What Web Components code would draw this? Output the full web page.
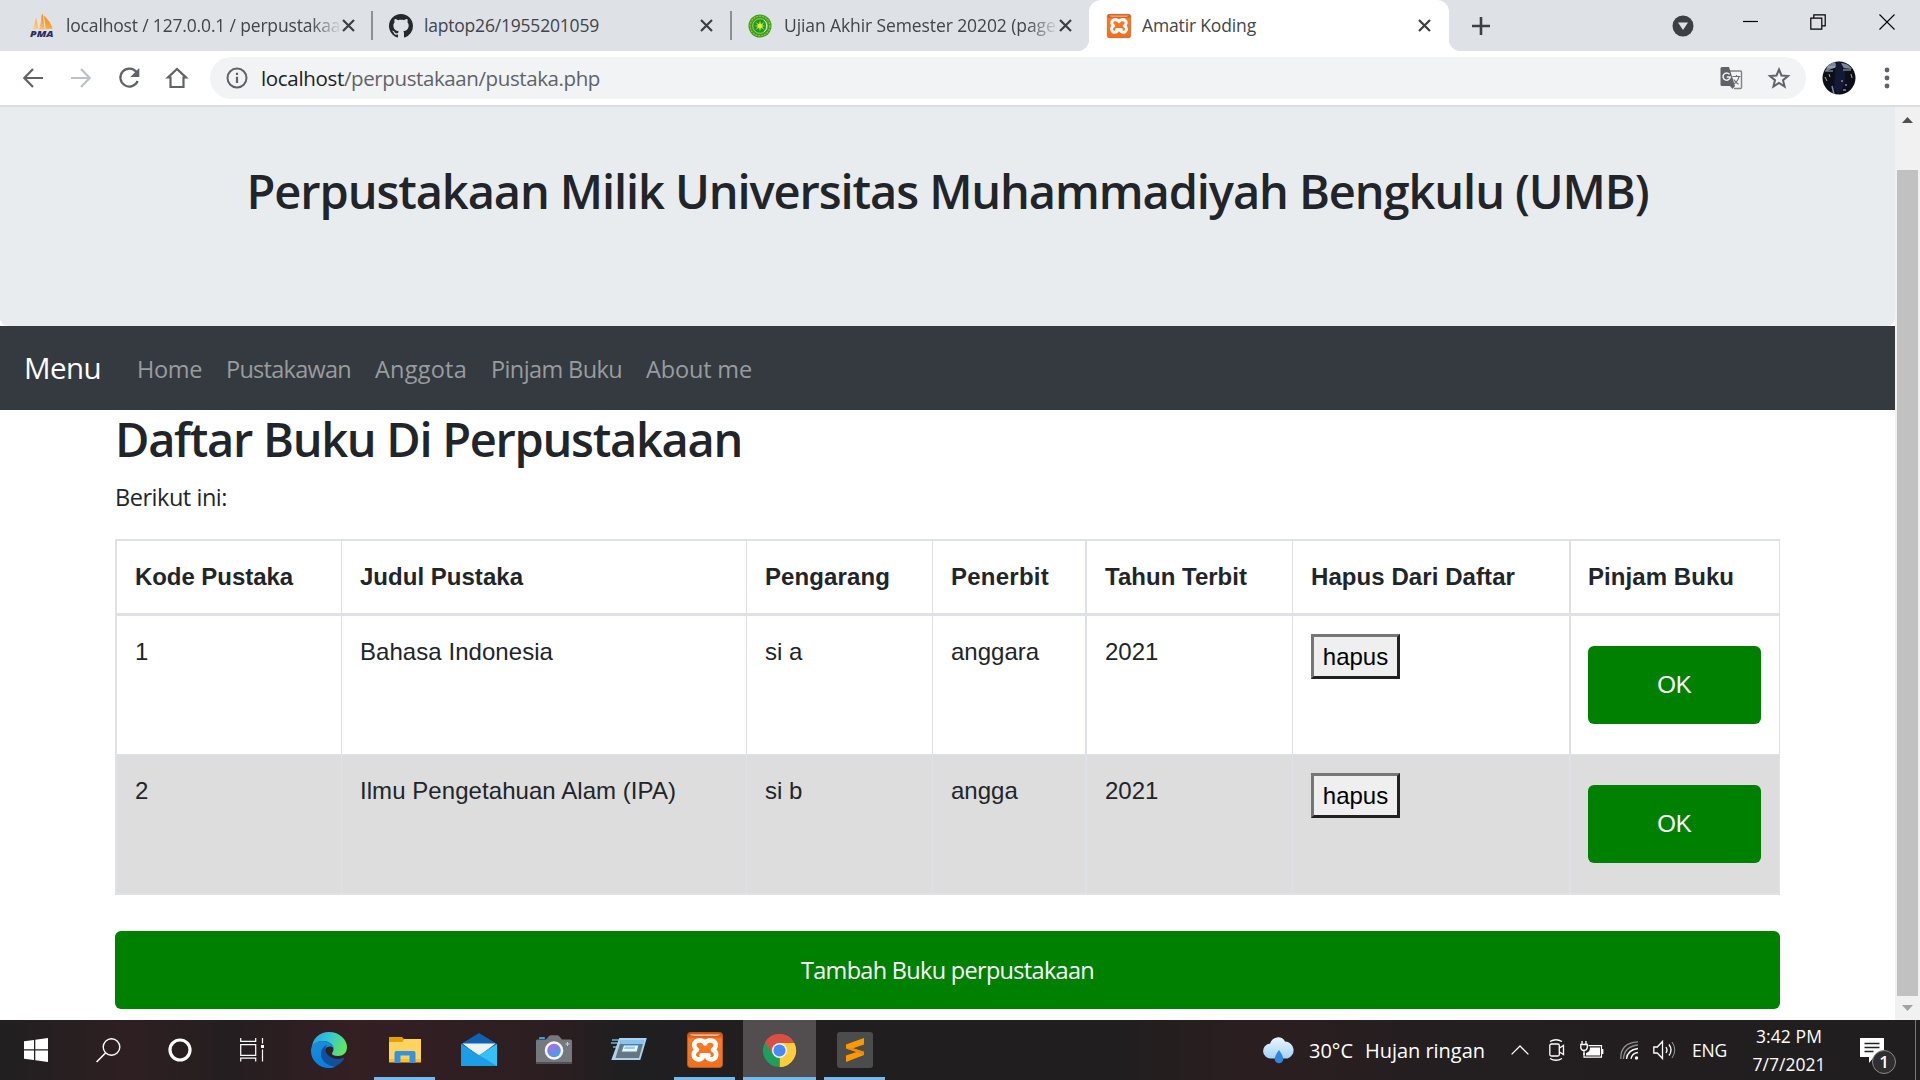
<!DOCTYPE html>
<html lang="id">
<head>
<meta charset="utf-8">
<title>Amatir Koding</title>
<style>
html,body{margin:0;width:1920px;height:1080px;overflow:hidden;background:#fff}
body{font-family:"Open Sans","Noto Sans",sans-serif}
</style>
</head>
<body>
<desk-screen></desk-screen>
<script>
const define=(name,html,ready)=>{
  const t=document.createElement('template');t.innerHTML=html;
  customElements.define(name,class extends HTMLElement{
    constructor(){super();this.attachShadow({mode:'open'}).append(t.content.cloneNode(true));}
    connectedCallback(){if(ready)ready(this,this.shadowRoot);}
  });
};

/* Text run whose tracking is tuned so the line is exactly `w` pixels wide */
define('fit-text','<style>:host{display:inline-block;white-space:pre;flex:none}span{display:inline-block}</style><span><slot></slot></span>',(el,r)=>{
  const w=+el.getAttribute('w'),s=r.querySelector('span');
  if(!w)return;
  el.style.width=w+'px';
  const n=el.textContent.length,nat=s.getBoundingClientRect().width;
  s.style.letterSpacing=((w-nat)/n)+'px';
});

const XAMPP=`<defs><linearGradient id="xg" x1="0" y1="0" x2="0" y2="1"><stop offset="0" stop-color="#c9571a"/><stop offset=".14" stop-color="#e0641f"/><stop offset=".18" stop-color="#fb7a24"/><stop offset="1" stop-color="#ee7020"/></linearGradient></defs>
<rect x=".5" y=".5" width="35" height="35" rx="3" fill="url(#xg)" stroke="#bb5a20"/><path d="M3 2.3h30q-1 1.7-4 1.7H7Q4 4 3 2.3z" fill="#f7b48a"/>
<path d="M18 11.3C16.500 8.500 12 7.500 9 9.500C6 12 7 16 10 17.800C6 19.500 5.800 25 9 26.700C12.500 28.300 16 26.500 16.300 23.500M18 11.300C19.500 8.500 24 7.500 27 9.500C30 12 29 16 26 17.800C30 19.500 30.200 25 27 26.700C23.500 28.300 20 26.500 19.700 23.500M14.500 23.300H21.500" fill="none" stroke="#fff" stroke-width="4.600" stroke-linecap="round" stroke-linejoin="round"/>`;
const ICONS={
 pma:[24,24,`<defs><linearGradient id="pg" x1="0" y1="1" x2="1" y2="0"><stop offset="0" stop-color="#fbd9a0"/><stop offset=".6" stop-color="#f99b2a"/><stop offset="1" stop-color="#f58a10"/></linearGradient></defs><path d="M2 15.500Q5.500 10 6 3.500L8.500 15zM9 15.500Q11.500 8 11.500 1L13 0l1.500 15.500zM14 1.500Q20 7 22.500 14.500L15.500 15.500z" fill="url(#pg)"/><text x="0" y="23" font-family="Open Sans" font-size="9.500" font-weight="800" font-style="italic" fill="#2c2c63" textLength="23.500" lengthAdjust="spacingAndGlyphs">PMA</text>`],
 github:[16,16,`<path fill="#24292e" d="M8 0C3.580 0 0 3.580 0 8c0 3.540 2.290 6.530 5.470 7.590.4.070.550-.170.550-.380 0-.190-.010-.820-.010-1.490-2.010.370-2.530-.490-2.690-.940-.090-.230-.480-.940-.820-1.130-.280-.150-.680-.520-.010-.530.630-.010 1.080.580 1.230.820.720 1.210 1.870.870 2.330.660.070-.520.280-.870.510-1.070-1.780-.200-3.640-.890-3.640-3.950 0-.870.310-1.590.820-2.150-.080-.200-.360-1.020.080-2.120 0 0 .670-.210 2.200.820.640-.180 1.320-.270 2-.270s1.360.090 2 .270c1.530-1.040 2.200-.820 2.200-.820.440 1.100.160 1.920.080 2.120.510.560.820 1.270.820 2.150 0 3.070-1.870 3.750-3.650 3.950.290.250.540.730.540 1.480 0 1.070-.010 1.930-.010 2.200 0 .210.150.460.550.380A8.010 8.010 0 0 0 16 8c0-4.420-3.580-8-8-8z"/>`],
 umb:[24,24,`<circle cx="12" cy="12" r="11.500" fill="#3d9a22"/><circle cx="12" cy="12" r="9.800" fill="none" stroke="#8fc93a" stroke-width="1.300" stroke-dasharray="2 1"/><circle cx="12" cy="12" r="7.300" fill="#149a2c" stroke="#b5d94a" stroke-width=".9"/><path d="M12 6.500l1.200 3.600L16.500 8l-2 3.200 3.500.8-3.500.8 2 3.200-3.300-2.100L12 17.500l-1.200-3.600L7.500 16l2-3.200L6 12l3.500-.8-2-3.200 3.300 2.100z" fill="#9ed62c"/><circle cx="12" cy="12" r="2.200" fill="#f2e52b"/><path d="M16 6a8 8 0 0 1 0 12" fill="none" stroke="#d9efc0"/>`],
 xampp:[36,36,XAMPP],
 x:[13,13,`<path d="M1 1l11 11M12 1L1 12" stroke="#3c4043" stroke-width="2.200"/>`],
 plus:[18,18,`<path d="M9 0v18M0 9h18" stroke="#3c4043" stroke-width="2.600"/>`],
 drop:[22,22,`<circle cx="11" cy="11" r="10.500" fill="#3c4043"/><path d="M6 7.500h10L11 15z" fill="#dee1e6"/>`],
 min:[15,15,`<path d="M0 7.500h15" stroke="#000" stroke-width="1.200"/>`],
 restore:[16,16,`<path d="M.8 4.200h11v11h-11zM3.800 4V.8h11.400v11H12" fill="none" stroke="#000" stroke-width="1.200"/>`],
 close:[16,16,`<path d="M.5.5l15 15M15.500.5l-15 15" stroke="#000" stroke-width="1.100"/>`],
 back:[20,20,`<path d="M10 1L1.300 10 10 19M1.500 10H20" fill="none" stroke="#5f6368" stroke-width="2.200"/>`],
 fwd:[20,20,`<path d="M10 1l8.700 9L10 19M18.500 10H0" fill="none" stroke="#bdc1c6" stroke-width="2.200"/>`],
 reload:[22,22,`<path d="M18.500 5A9 9 0 1 0 19.700 14" fill="none" stroke="#5f6368" stroke-width="2.200"/><path d="M21.300 1v9h-9z" fill="#5f6368"/>`],
 home:[22,22,`<path d="M4.500 20h13v-9.500h2.500L11 2 2 10.500h2.500z" fill="none" stroke="#5f6368" stroke-width="2.200"/>`],
 info:[22,22,`<circle cx="11" cy="11" r="9.500" fill="none" stroke="#5f6368" stroke-width="2"/><path d="M11 9.800v6.200M11 5.800v2.200" stroke="#5f6368" stroke-width="2.200"/>`],
 trans:[23,23,`<path d="M10 4h10.500q1 0 1 1v15.500q0 1-1 1H14" fill="none" stroke="#808489" stroke-width="1.400"/><path d="M2 0h7l6 19H2q-1.500 0-1.500-1.500v-16Q.5 0 2 0z" fill="#5f6368"/><path d="M10 19h5l-2.500 3z" fill="#5f6368"/><path d="M9.500 7.400A3.600 3.600 0 1 0 10.200 10H6.800" fill="none" stroke="#f1f3f4" stroke-width="1.500"/><path d="M12.500 9.500h8M16.500 8v1.500M19 9.800q-1.500 5-5 7M13.800 12.500q2 3.500 4.800 4.800" fill="none" stroke="#6c7075" stroke-width="1.200"/>`],
 star:[22,22,`<path d="M11 2.500l2.500 6 6.500.5-5 4.200 1.600 6.300L11 16l-5.600 3.500L7 13.200 2 9l6.500-.5z" fill="none" stroke="#5f6368" stroke-width="2"/>`],
 avatar:[34,34,`<defs><clipPath id="ac"><circle cx="17" cy="17" r="16.500"/></clipPath></defs><g clip-path="url(#ac)"><path fill="#0d0f18" d="M0 0h34v34H0z"/><path d="M5 5q5-5 8-4l2 5-11 4zM19 2q7 0 11 6l-10-1z" fill="#7b8798"/><path d="M14 3l3-3 3 4 3 5v10l-3 10-4 4-4-6 1-14z" fill="#141a36"/><path d="M3 10h8M21 9h8M6 6h7" stroke="#aab5c2" stroke-width="1"/><path d="M3 16l2 4M7 13l1 3M29 13l1 4" stroke="#b7b264" stroke-width="1"/><path d="M10 25l2 8M19 20h2M23 24h2M21 29h3" stroke="#8289a8" stroke-width="1.500"/></g>`],
 dots:[6,22,`<g fill="#5f6368"><circle cx="3" cy="3" r="2.400"/><circle cx="3" cy="11" r="2.400"/><circle cx="3" cy="19" r="2.400"/></g>`],
 win:[24,24,`<path fill="#fff" d="M0 3.300l10-1.300v9.300H0zM11.300 1.700L24 0v11.300H11.300zM0 12.500h10V22L0 20.700zM11.300 12.500H24V24l-12.700-1.800z"/>`],
 search:[25,25,`<circle cx="15.500" cy="9" r="8.300" fill="none" stroke="#fff" stroke-width="1.400"/><path d="M9.500 15L.6 24" stroke="#fff" stroke-width="1.600"/>`],
 cortana:[24,24,`<circle cx="12" cy="12" r="10" fill="none" stroke="#fff" stroke-width="3.200"/>`],
 task:[24,24,`<path d="M.7 0v3.300h15V0M.7 6.700h15v10.600H.7zM.7 23.500v-3.300h15v3.300M22.500 0v5.500M22.500 11.500v12" fill="none" stroke="#fff" stroke-width="1.200"/><path d="M21 7h3v3h-3z" fill="#fff"/>`],
 edge:[36,36,`<defs><linearGradient id="e1" x1="0" y1=".3" x2="1" y2=".6"><stop offset="0" stop-color="#2aa5e6"/><stop offset=".45" stop-color="#35c8d2"/><stop offset="1" stop-color="#66e858"/></linearGradient><linearGradient id="e2" x1="0" y1="0" x2=".3" y2="1"><stop offset="0" stop-color="#1b8fd8"/><stop offset="1" stop-color="#0b7fe0"/></linearGradient></defs><path d="M1 16C1 7 8 0 18 0c11 0 18 8 18 15 0 6-4 9-9 9-4 0-6-1-6-2.500 0-1 1.500-1.500 1.500-4.500C22.500 12 17 9 12 9 6 9 2 12 1 16z" fill="url(#e1)"/><path d="M0 19C0 12 5 9 12 9c6 0 10.500 3 10.500 7-3-3.500-10-1-10 6 0 6 5 12 12 12.500C22 35.500 20 36 18 36 8 36 0 28.500 0 19z" fill="url(#e2)"/><path d="M10 22c0-5 3-8 6-9-2.500 3-2 7 1 10 4 4 10 5 15 3 1-.4 1.500.3 1 1-2 3-5 6-9 7.500C16 34 10 28.500 10 22z" fill="#10509c"/>`],
 folder:[32,26,`<path d="M0 0h13l2 2-2 4H0z" fill="#e3a008"/><path d="M0 5h13l2-3h17v23H0z" fill="#ffd35c"/><path d="M0 22h32v3.500H0z" fill="#fbc02f"/><path d="M5.500 26V16q0-2 2-2h17q2 0 2 2v10h-6v-7.500h-9V26z" fill="#3692df"/>`],
 mail:[36,34,`<path d="M0 11L18 0l18 11v6H0z" fill="#0f62b0"/><path d="M1.500 10.500h33L18 23z" fill="#eef1f4"/><path d="M36 11v22H0z" fill="#35c1f3"/><path d="M0 11l36 22H0z" fill="#1c9de6"/>`],
 camera:[36,30,`<path d="M3 4V3q0-1 1-1h4q1 0 1 1v1z" fill="#28a5ea"/><path d="M0 6q0-1.500 1.500-1.500H10L13 1q.7-.8 2-.8h6q1.300 0 2 .8l3 3.500h8.500Q36 4.500 36 6v22q0 1-1 1H1q-1 0-1-1z" fill="#75797d"/><path d="M0 27h36v1.500q0 .5-1 .5H1q-1 0-1-.5z" fill="#4f5358"/><circle cx="18" cy="15.500" r="9.300" fill="#f5f5f5"/><defs><linearGradient id="cg" x1=".2" y1="0" x2=".7" y2="1"><stop offset="0" stop-color="#b569da"/><stop offset="1" stop-color="#3aa4ec"/></linearGradient></defs><circle cx="18" cy="15.500" r="6.800" fill="url(#cg)"/><path d="M31.500 7v4M29.500 9h4" stroke="#ccc"/>`],
 run:[36,26,`<path d="M1 3h8M0 6h8M2 10h5" stroke="#7aa9d0" stroke-width="1.300"/><path d="M8 1h27.500l-6.500 22H0z" fill="#a9d3ef" transform="translate(.3 0)"/><path d="M10 3h23l-5 18H4.500z" fill="#6b747b"/><path d="M10 3h23l-1 4H9z" fill="#8cc4ee"/><path d="M12.500 8h15.500l-1.800 7H10z" fill="#eef6fc" stroke="#3e88c8" stroke-width="1.200"/><path d="M14 9.500h10l-.5 2.500H13z" fill="#9ccbee"/>`],
 chrome:[48,48,`<path d="M24 24L3.200 12A24 24 0 0 1 44.800 12z" fill="#d94f43"/><path d="M24 24L44.800 12A24 24 0 0 1 24 48z" fill="#fccd3b"/><path d="M24 24L24 48A24 24 0 0 1 3.200 12z" fill="#1ea05c"/><path d="M24 13h21.300A24 24 0 0 0 3.200 12l11.300 17.500z" fill="#d94f43"/><path d="M33.500 29.500L24 48A24 24 0 0 0 45.300 13H24z" fill="#fccd3b"/><circle cx="24" cy="24" r="11" fill="#f1f1f1"/><circle cx="24" cy="24" r="8.800" fill="#4a88f2"/>`],
 sublime:[36,36,`<rect width="36" height="36" rx="3" fill="#4b4d4d"/><path d="M9 12.500L27 6v6.500L16 16.300l11 3.400V23L9 30v-6.500l10.500-3.600L9 16.500z" fill="#ff9800"/><path d="M9 16.500l7-.2 11 3.400V23l-7.500-3.100z" fill="#f0880a"/>`],
 weather:[32,30,`<defs><linearGradient id="wg" x1="0" y1="0" x2="0" y2="1"><stop offset="0" stop-color="#eaf6ff"/><stop offset="1" stop-color="#a4d2f4"/></linearGradient></defs><path d="M8 23.500a7.500 7.500 0 0 1-.8-15A8 8 0 0 1 22 6.500a8.700 8.700 0 0 1 2.500 17z" fill="url(#wg)"/><path d="M16 15q4.300 6 4.300 9a4.300 4.300 0 0 1-8.600 0q0-3 4.300-9z" fill="#2e86dd"/>`],
 chev:[18,10,`<path d="M.6 9.400L9 1l8.400 8.400" fill="none" stroke="#fff" stroke-width="1.300"/>`],
 meet:[16,22,`<g fill="none" stroke="#fff" stroke-width="1.300"><rect x=".8" y="5" width="9.500" height="12" rx="1.500"/><path d="M10.500 9l4-2.500v9l-4-2.500M1 2.500Q7 -1 13 2.500M1 19.500Q7 23 13 19.500"/></g>`],
 batt:[24,18,`<path d="M8.500 4.700h13v11.500H4V12" fill="none" stroke="#fff" stroke-width="1.200"/><path d="M10 6.500h10v8H6v-2.500q4-1 4-5.500z" fill="#fff"/><path d="M22.500 8v5" stroke="#fff" stroke-width="1.800"/><path d="M2 0v3M6 0v3M.8 3.500h6.500v3Q7 9.500 4 9.500T.8 6.500zM4 9.500V14" fill="none" stroke="#fff" stroke-width="1.300"/>`],
 wifi:[19,19,`<circle cx="16.500" cy="17" r="1.700" fill="#fff"/><g fill="none" stroke="#fff" stroke-width="1.300"><path d="M11 18q1-6 7-6.500M6.500 18Q7 9 18 7.500"/><path d="M3.500 18Q4 5.500 18 4M.8 18Q0 2 18 .8" opacity=".5"/></g>`],
 vol:[24,20,`<path d="M.8 7h3.500L9.500 1.500v17L4.300 13H.8z" fill="none" stroke="#fff" stroke-width="1.300"/><path d="M13 7q2 3 0 6M16 4.500q4 5.500 0 11" fill="none" stroke="#fff" stroke-width="1.300"/><path d="M19 2q5.500 8 0 16" fill="none" stroke="#999"/>`],
 note:[24,25,`<path d="M0 0h24v19H14l-5 6v-6H0z" fill="#fff"/><path d="M4.500 5.500h15M4.500 9.500h15M4.500 13.500h9" stroke="#222" stroke-width="1.300"/>`],
 up:[11,6,`<path d="M0 6L5.500 0 11 6z" fill="#505050"/>`],
 down:[11,6,`<path d="M0 0h11L5.500 6z" fill="#a3a3a3"/>`]
};
define('ui-icon','<style>:host{display:block;flex:none}svg{display:block;overflow:visible}</style>',(el,r)=>{
  const i=ICONS[el.getAttribute('n')],w=el.getAttribute('w')||i[0],h=el.getAttribute('h')||i[1];
  r.innerHTML+=`<svg width="${w}" height="${h}" viewBox="0 0 ${i[0]} ${i[1]}">${i[2]}</svg>`;
});

define('browser-tab',`<style>:host{display:flex;align-items:center;height:51px;box-sizing:border-box;color:#41454a;font-size:17.500px;line-height:24px;position:relative;flex:none}
.t{overflow:hidden;flex:1;padding-bottom:1px}:host([fade]) .t{-webkit-mask:linear-gradient(90deg,#000 calc(100% - 32px),transparent)}
:host([active]){background:#fff;border-radius:12px 12px 0 0}
:host([active])::before,:host([active])::after{content:"";position:absolute;bottom:0;width:12px;height:12px}
:host([active])::before{left:-12px;background:radial-gradient(circle at 0 0,transparent 12px,#fff 12.500px)}
:host([active])::after{right:-12px;background:radial-gradient(circle at 100% 0,transparent 12px,#fff 12.500px)}
</style><slot name="i"></slot><div class="t"><slot></slot></div><ui-icon n="x"></ui-icon>`);

define('browser-chrome',`<style>:host{display:block;height:107px;background:#fff}
.strip{display:flex;height:51px;background:#dee1e6;align-items:center}
.sep{width:2px;height:29px;background:#8d9095;flex:none}
.bar{display:flex;height:54px;align-items:center;border-bottom:2px solid #d9dce0}
.omni{display:flex;align-items:center;width:1596px;height:42px;border-radius:21px;background:#f1f3f4;box-sizing:border-box;padding-left:16px;margin-left:22px;font-size:20.500px;line-height:28px;color:#5f6368}
b{font-weight:400;color:#202124}
</style>
<div class="strip">
<browser-tab fade style="width:340px;margin-left:30px;margin-right:1px;padding-right:15px"><ui-icon slot="i" n="pma" style="margin-right:12px"></ui-icon><fit-text w="285">localhost / 127.0.0.1 / perpustakaan</fit-text></browser-tab><span class="sep"></span>
<browser-tab style="width:356px;padding-left:16px;padding-right:16px"><ui-icon slot="i" n="github" w="24" h="24" style="margin-right:11px"></ui-icon><fit-text w="175">laptop26/1955201059</fit-text></browser-tab><span class="sep" style="margin-left:1px"></span>
<browser-tab fade style="width:357px;padding-left:16px;padding-right:17px"><ui-icon slot="i" n="umb" style="margin-right:12px"></ui-icon><fit-text w="286">Ujian Akhir Semester 20202 (page 1</fit-text></browser-tab>
<browser-tab active style="width:360px;padding-left:18px;padding-right:18px"><ui-icon slot="i" n="xampp" w="24" h="24" style="margin-right:11px"></ui-icon><fit-text w="114">Amatir Koding</fit-text></browser-tab>
<ui-icon n="plus" style="margin-left:23px"></ui-icon>
<ui-icon n="drop" style="margin-left:182px"></ui-icon>
<ui-icon n="min" style="margin-left:49px;margin-bottom:8px"></ui-icon>
<ui-icon n="restore" style="margin-left:52px;margin-bottom:8px"></ui-icon>
<ui-icon n="close" style="margin-left:53px;margin-bottom:8px"></ui-icon>
</div>
<div class="bar">
<ui-icon n="back" style="margin-left:23px"></ui-icon><ui-icon n="fwd" style="margin-left:28px"></ui-icon><ui-icon n="reload" style="margin-left:27px"></ui-icon><ui-icon n="home" style="margin-left:26px"></ui-icon>
<div class="omni"><ui-icon n="info"></ui-icon><fit-text w="83" style="margin-left:13px;color:#202124">localhost</fit-text><fit-text w="256">/perpustakaan/pustaka.php</fit-text>
<ui-icon n="trans" style="margin-left:1120px"></ui-icon><ui-icon n="star" style="margin-left:25px"></ui-icon></div>
<ui-icon n="avatar" style="margin-left:16px"></ui-icon><ui-icon n="dots" style="margin-left:28px"></ui-icon>
</div>`);

define('scroll-bar',`<style>:host{display:flex;flex-direction:column;align-items:center;width:25px;height:913px;background:#f1f1f1;padding:10px 0 9px;box-sizing:border-box}.th{width:21px;height:826px;background:#c1c1c1;margin:47px 0 9px}</style><ui-icon n="up"></ui-icon><div class="th"></div><ui-icon n="down"></ui-icon>`);

define('nav-bar',`<style>:host{display:flex;align-items:center;height:84px;background:#343a40;padding-left:24px;box-sizing:border-box;color:#999c9f;font-size:23.500px;line-height:36px}
.brand{font-size:29.500px;color:#fff;margin-right:36px}nav{display:flex;gap:24px;padding-top:1px}</style>
<fit-text class="brand" w="77">Menu</fit-text><nav><fit-text w="65">Home</fit-text><fit-text w="125">Pustakawan</fit-text><fit-text w="92">Anggota</fit-text><fit-text w="131">Pinjam Buku</fit-text><fit-text w="106">About me</fit-text></nav>`);

define('green-button',`<style>:host{display:block}button{display:flex;justify-content:center;align-items:center;width:100%;height:78px;border:0;border-radius:6px;background:#008000;color:#fff;font:inherit;padding:0}</style><button><slot></slot></button>`);
define('hapus-button',`<style>:host{display:block}button{display:block;width:89px;height:45px;box-sizing:border-box;border:3px solid;border-color:#767676 #212121 #212121 #767676;background:#efefef;color:#000;font:24px "Liberation Sans",Arial,sans-serif;padding:0}</style><button><slot></slot></button>`);

define('book-row',`<style>:host{display:grid;grid-template-columns:226px 405px 186px 153px 207px 277px 211px;box-sizing:border-box}
::slotted(*){box-sizing:border-box;padding:18px 0 0 18px;border-left:1px solid #dee2e6}
::slotted(:nth-child(1)),::slotted(:nth-child(5)){border-left-width:2px}
::slotted(:nth-child(1)){padding-left:18px}
::slotted(:nth-child(7)){border-left-width:2px;padding:18px 18px 0 17px;border-right:1px solid #dee2e6}
</style><slot></slot>`);

define('book-table',`<style>:host{display:block;width:1665px;border-top:2px solid #dee2e6;border-bottom:2px solid #dee2e6;box-sizing:border-box;font:24px/36px "Liberation Sans",Arial,sans-serif;color:#212529}
.h{font-weight:700;height:75px;border-bottom:3px solid #dee2e6}.a{height:138px}.b{height:139px;background:#ddd;border-top:1px solid #dee2e6}
green-button{margin-top:12px}
</style>
<book-row class="h"><div><fit-text w="158">Kode Pustaka</fit-text></div><div><fit-text w="163">Judul Pustaka</fit-text></div><div><fit-text w="125">Pengarang</fit-text></div><div><fit-text w="98">Penerbit</fit-text></div><div><fit-text w="142">Tahun Terbit</fit-text></div><div><fit-text w="204">Hapus Dari Daftar</fit-text></div><div><fit-text w="146">Pinjam Buku</fit-text></div></book-row>
<book-row class="a"><div>1</div><div><fit-text w="193">Bahasa Indonesia</fit-text></div><div>si a</div><div>anggara</div><div>2021</div><div><hapus-button>hapus</hapus-button></div><div><green-button>OK</green-button></div></book-row>
<book-row class="b"><div>2</div><div><fit-text w="316">Ilmu Pengetahuan Alam (IPA)</fit-text></div><div>si b</div><div>angga</div><div>2021</div><div><hapus-button>hapus</hapus-button></div><div><green-button>OK</green-button></div></book-row>`);

define('library-page',`<style>:host{display:block;width:1895px;height:913px;color:#212529;overflow:hidden;background:#fff}
.jumbo{height:219px;background:#e9ecef;border-radius:0 0 8px 8px;box-sizing:border-box;padding-top:55px;text-align:center}
.h{font-size:47px;font-weight:600;line-height:58px}
main{display:block;padding-left:115px;width:1665px}
p{margin:0;font-size:23.500px;line-height:36px}
book-table{margin-top:24px}
.add{margin-top:36px;font-size:23.500px}
</style>
<div class="jumbo"><fit-text class="h" w="1402">Perpustakaan Milik Universitas Muhammadiyah Bengkulu (UMB)</fit-text></div>
<nav-bar></nav-bar>
<main><div style="height:58px"><fit-text class="h" w="627">Daftar Buku Di Perpustakaan</fit-text></div>
<p style="padding-top:11px"><fit-text w="112">Berikut ini:</fit-text></p>
<book-table></book-table>
<green-button class="add"><fit-text w="293">Tambah Buku perpustakaan</fit-text></green-button></main>`);

define('task-app',`<style>:host{display:flex;align-items:center;justify-content:center;height:60px;flex:none;box-sizing:border-box}
:host([run]){box-shadow:inset 0 -3px #76b9ed}:host([active]){background:#524e4f}</style><slot></slot>`);

define('task-bar',`<style>:host{display:flex;align-items:center;height:60px;background:linear-gradient(90deg,#211f20 0,#2e1f22 130px,#241e20 230px,#341f23 350px,#2b1e21 560px,#1f1f20 620px,#221e20 750px,#211e1f 1120px,#2c1e20 1260px,#231e20 1450px,#211e1f);color:#fff;font-size:17.500px;line-height:28px}
.clock{display:flex;flex-direction:column;align-items:center;width:72px;margin-left:26px}
.note{position:relative;margin-left:35px}
.badge{position:absolute;left:12px;top:12px;width:22px;height:22px;border:1px solid #888;border-radius:50%;background:#302f30;font-size:17px;line-height:22px;text-align:center;font-weight:600}
.peek{width:1px;height:60px;background:#777;margin-left:31px}
</style>
<ui-icon n="win" style="margin-left:24px"></ui-icon><ui-icon n="search" style="margin-left:48px"></ui-icon><ui-icon n="cortana" style="margin-left:47px"></ui-icon><ui-icon n="task" style="margin-left:48px"></ui-icon>
<ui-icon n="edge" style="margin-left:47px"></ui-icon>
<task-app run style="width:61px;margin-left:27px"><ui-icon n="folder"></ui-icon></task-app>
<ui-icon n="mail" style="margin-left:26px"></ui-icon><ui-icon n="camera" style="margin-left:39px"></ui-icon><ui-icon n="run" style="margin-left:39px"></ui-icon>
<task-app run style="width:61px;margin-left:27px"><ui-icon n="xampp"></ui-icon></task-app>
<task-app run active style="width:73px;margin-left:8px"><ui-icon n="chrome" w="33" h="33"></ui-icon></task-app>
<task-app run style="width:61px;margin-left:8px"><ui-icon n="sublime"></ui-icon></task-app>
<ui-icon n="weather" style="margin-left:378px"></ui-icon>
<fit-text w="44" style="font-size:20px;margin-left:14px;padding-top:2px">30°C</fit-text><fit-text w="120" style="font-size:20px;margin-left:12px;padding-top:2px">Hujan ringan</fit-text>
<ui-icon n="chev" style="margin-left:26px"></ui-icon><ui-icon n="meet" style="margin-left:20px"></ui-icon><ui-icon n="batt" style="margin-left:15px"></ui-icon><ui-icon n="wifi" style="margin-left:16px"></ui-icon><ui-icon n="vol" style="margin-left:14px"></ui-icon>
<fit-text w="35" style="margin-left:15px">ENG</fit-text>
<div class="clock"><fit-text w="66">3:42 PM</fit-text><fit-text w="73">7/7/2021</fit-text></div>
<div class="note"><ui-icon n="note"></ui-icon><div class="badge">1</div></div><div class="peek"></div>`);

define('desk-screen',`<style>:host{display:flex;flex-direction:column;width:1920px;height:1080px}.v{display:flex;height:913px}</style><browser-chrome></browser-chrome><div class="v"><library-page></library-page><scroll-bar></scroll-bar></div><task-bar></task-bar>`);
</script>
</body>
</html>
